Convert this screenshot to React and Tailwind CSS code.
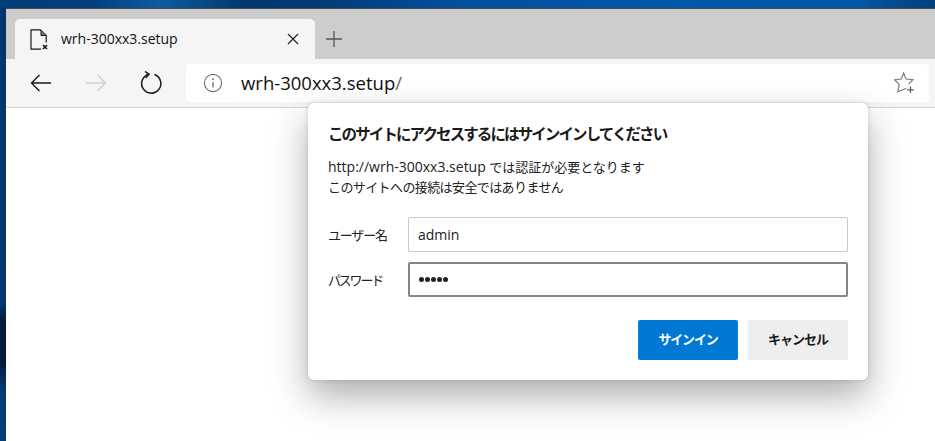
import React from "react";

const font = { fontFamily: '"Open Sans","Noto Sans CJK JP",sans-serif' };

export default function App() {
  return (
    <div className="relative h-[441px] w-[935px] overflow-hidden bg-[#023a72] pl-[6px] pt-[8px]" style={font}>
      <div className="absolute inset-x-0 top-0 h-[8px] bg-[linear-gradient(90deg,#013c78_0%,#02407e_10%,#0d5c9f_17%,#02386f_26%,#013a74_33%,#0350a0_50%,#0258a8_75%,#0258a6_92%,#024a8c_96%,#02407c_100%)]" />
      <div className="absolute bottom-0 left-0 h-[433px] w-[6px] bg-[linear-gradient(180deg,#02366c_0%,#02386f_68%,#021b3f_72%,#021b3f_82%,#023a70_88%,#023e74_100%)]" />
      <div className="relative flex h-[433px] flex-col border-t border-[#4a4a4a] bg-white">
        <div className="flex h-[50px] items-end bg-[#cdcdcd] pl-[9px]">
          <div className="flex h-[40px] w-[300px] items-center rounded-t-[5px] bg-[#f5f5f5] pl-[15px] pr-[16px]">
            <svg width="18" height="21" viewBox="0 0 18 21" fill="none" stroke="#1a1a1a" strokeWidth="1.2" className="shrink-0">
              <path d="M11 20.2H1V.8h9.5l5.7 5.7v7" />
              <path d="M11 1v5.5h5.2" fill="#777" strokeWidth="1" />
              <path d="M13 16l4 4M17 16l-4 4" strokeWidth="1.7" />
            </svg>
            <span className="ml-[13px] flex-1 text-[14px] leading-none text-[#111]">wrh-300xx3.setup</span>
            <svg width="12" height="12" viewBox="0 0 12 12" stroke="#222" strokeWidth="1.2" className="shrink-0">
              <path d="M1 1l10 10M11 1L1 11" />
            </svg>
          </div>
          <div className="flex h-[40px] w-[38px] items-center justify-center">
            <svg width="18" height="18" viewBox="0 0 18 18" stroke="#555" strokeWidth="1.3">
              <path d="M9 1v16M1 9h16" />
            </svg>
          </div>
        </div>
        <div className="flex h-[49px] items-center border-b border-[#d4d4d4] bg-[#f5f5f5] pl-[24px] pr-[6px]">
          <svg width="22" height="18" viewBox="0 0 22 18" fill="none" stroke="#1a1a1a" strokeWidth="1.4" className="shrink-0">
            <path d="M21 9H1.5M9.5 1l-8 8 8 8" />
          </svg>
          <svg width="22" height="18" viewBox="0 0 22 18" fill="none" stroke="#cfcfcf" strokeWidth="1.4" className="ml-[33px] shrink-0">
            <path d="M1 9h19.5M12.5 1l8 8-8 8" />
          </svg>
          <svg width="22" height="24" viewBox="0 0 22 24" fill="none" stroke="#1a1a1a" strokeWidth="1.5" className="ml-[33px] shrink-0">
            <path d="M9 3.2A9.6 9.6 0 1 0 14.5 3.5" />
            <path d="M5 .5l4 2.7-3.4 3.8" />
          </svg>
          <div className="ml-[24px] flex h-[38px] flex-1 items-center rounded-[4px] bg-white pl-[17px] pr-[13px]">
            <svg width="20" height="20" viewBox="0 0 20 20" fill="none" className="shrink-0">
              <circle cx="10" cy="10" r="8.6" stroke="#777" strokeWidth="1.2" />
              <path d="M10 9v5.5" stroke="#777" strokeWidth="1.4" />
              <circle cx="10" cy="6.3" r="1" fill="#777" />
            </svg>
            <span className="ml-[18px] flex-1 text-[18.5px] leading-none text-[#111]">
              wrh-300xx3.setup<span className="text-[#666]">/</span>
            </span>
            <svg width="22" height="22" viewBox="0 0 22 22" fill="none" stroke="#7f7f7f" strokeWidth="1.2" className="shrink-0">
              <path d="M12.4 16.2L3.8 19.8l1.4-7.4L.5 7.8l6.8-.8L9.6 1l2.4 6 7 .8-4.4 4.3" />
              <path d="M16.5 14.5v6.5M13.2 17.8h6.6" stroke="#555" />
            </svg>
          </div>
        </div>
      </div>

      <div className="absolute left-[308px] top-[103px] flex h-[277px] w-[560px] flex-col rounded-[6px] bg-white px-[20px] pt-[20px] shadow-[0_16px_36px_rgba(0,0,0,0.32),0_0_4px_rgba(0,0,0,0.15)]">
        <div className="text-[15.5px] font-bold leading-[22px] tracking-[-1.9px] text-[#1a1a1a]">
          このサイトにアクセスするにはサインインしてください
        </div>
        <div className="mt-[12px] text-[13px] leading-[20px] text-[#222]">
          <div>
            <span className="text-[14px]">http://wrh-300xx3.setup</span>
            <span> では認証が必要となります</span>
          </div>
          <div className="tracking-[-0.6px]">このサイトへの接続は安全ではありません</div>
        </div>
        <div className="mt-[20px] flex h-[35px] items-center">
          <span className="w-[80px] pt-[2px] text-[13px] tracking-[-1.2px] text-[#222]">ユーザー名</span>
          <div className="flex h-[35px] flex-1 items-center rounded-[2px] border border-[#c8c8c8] pl-[9px] text-[14px] text-[#222]">
            admin
          </div>
        </div>
        <div className="mt-[10px] flex h-[35px] items-center">
          <span className="w-[80px] pt-[2px] text-[13px] tracking-[-2.2px] text-[#222]">パスワード</span>
          <div className="flex h-[35px] flex-1 items-center gap-[1px] rounded-[2px] border-2 border-[#858585] pl-[9px]">
            {[0, 1, 2, 3, 4].map((i) => (
              <span key={i} className="h-[5px] w-[5px] rounded-full bg-[#222]" />
            ))}
          </div>
        </div>
        <div className="mt-[23px] flex justify-end gap-[10px]">
          <div className="flex h-[40px] w-[100px] items-center justify-center rounded-[2px] bg-[#0078d4] text-[13px] font-bold tracking-[-1.2px] text-white">
            サインイン
          </div>
          <div className="flex h-[40px] w-[100px] items-center justify-center rounded-[2px] bg-[#eeeeee] text-[13px] font-bold tracking-[-1px] text-[#1a1a1a]">
            キャンセル
          </div>
        </div>
      </div>
    </div>
  );
}
